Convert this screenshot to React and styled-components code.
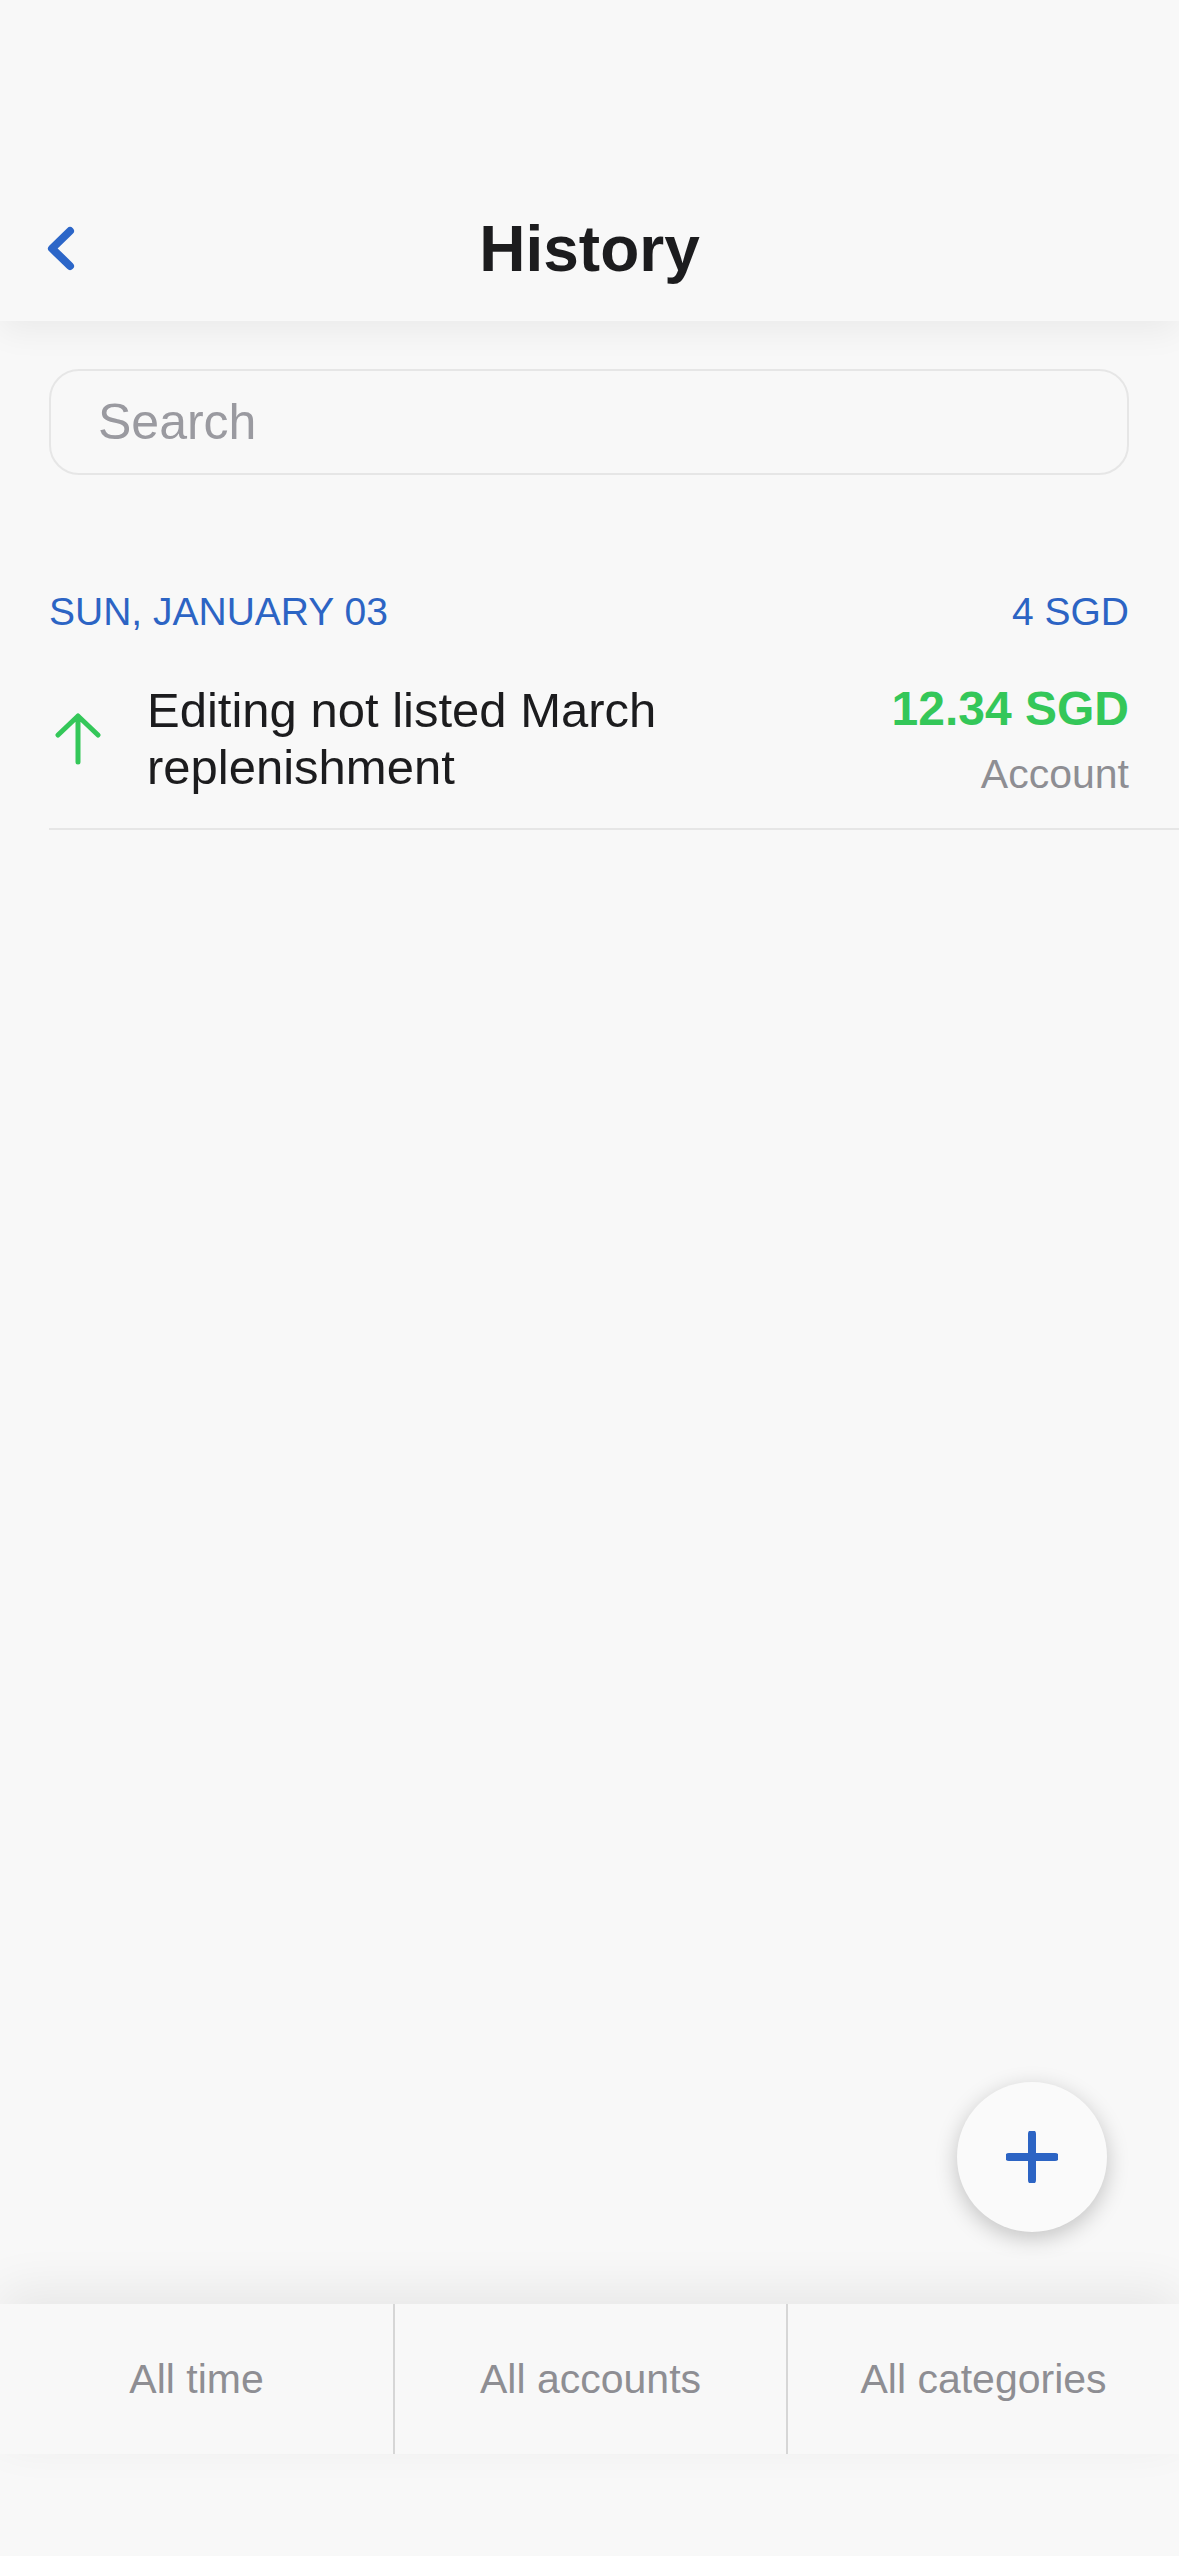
import React from 'react';
import styled, { createGlobalStyle } from 'styled-components';

const GlobalStyle = createGlobalStyle`
  html, body {
    margin: 0;
    padding: 0;
    background: #f8f8f8;
    font-family: "Liberation Sans", Arial, sans-serif;
  }
`;

const Screen = styled.div`
  display: flex;
  flex-direction: column;
  height: 2556px;
  background: #f8f8f8;
  overflow: hidden;
`;

const Header = styled.header`
  position: relative;
  z-index: 2;
  height: 321px;
  box-sizing: border-box;
  padding: 185px 0 8px;
  background: #f8f8f8;
  box-shadow: 0 10px 32px rgba(0, 0, 0, 0.06);
`;

const NavRow = styled.div`
  display: grid;
  grid-template-columns: 1fr auto 1fr;
  align-items: center;
  height: 128px;
`;

const BackButton = styled.button`
  justify-self: start;
  display: flex;
  align-items: center;
  margin-left: 44px;
  padding: 0;
  border: 0;
  background: none;
`;

const Title = styled.h1`
  margin: 0;
  font-size: 64px;
  line-height: 64px;
  font-weight: 700;
  color: #1c1c1e;
`;

const Main = styled.main`
  position: relative;
  flex: 1;
`;

const SearchBox = styled.div`
  display: flex;
  align-items: center;
  height: 106px;
  margin: 48px 50px 0 49px;
  padding-left: 47px;
  box-sizing: border-box;
  border: 2px solid #e6e6e6;
  border-radius: 30px;
  font-size: 50px;
  color: #9a9aa0;
`;

const SectionHeader = styled.div`
  display: flex;
  justify-content: space-between;
  margin: 118px 50px 0 49px;
  font-size: 39px;
  line-height: 38px;
  color: #2c64c4;
`;

const Row = styled.div`
  display: flex;
  align-items: center;
  margin: 19px 0 0 49px;
  padding: 30px 50px 30px 0;
  border-bottom: 2px solid #e6e6e6;
`;

const IconSlot = styled.div`
  display: flex;
  align-items: center;
  width: 98px;
  flex-shrink: 0;
  padding-left: 6px;
  box-sizing: border-box;
`;

const RowTitle = styled.div`
  flex: 1;
  max-width: 580px;
  font-size: 49px;
  line-height: 57px;
  color: #1c1c1e;
`;

const RowMeta = styled.div`
  margin-left: auto;
  display: flex;
  flex-direction: column;
  align-items: flex-end;
`;

const Amount = styled.div`
  font-size: 48px;
  line-height: 57px;
  font-weight: 700;
  color: ${(p) => (p.income ? '#34c759' : '#1c1c1e')};
`;

const AccountName = styled.div`
  margin-top: 13px;
  font-size: 41px;
  line-height: 48px;
  color: #8e8e93;
`;

const Fab = styled.button`
  position: absolute;
  right: 72px;
  bottom: 72px;
  display: flex;
  align-items: center;
  justify-content: center;
  width: 150px;
  height: 150px;
  padding: 0;
  border: 0;
  border-radius: 50%;
  background: #fafafa;
  box-shadow: 0 6px 22px rgba(0, 0, 0, 0.22);
`;

const FilterBar = styled.nav`
  position: relative;
  z-index: 2;
  display: grid;
  grid-template-columns: repeat(3, 1fr);
  height: 150px;
  background: #f8f8f8;
  box-shadow: 0 -14px 50px rgba(0, 0, 0, 0.07);
`;

const FilterItem = styled.div`
  display: flex;
  align-items: center;
  justify-content: center;
  font-size: 41px;
  color: #8e8e93;
  border-left: ${(p) => (p.first ? 'none' : '2px solid #d6d6d6')};
`;

const SafeArea = styled.div`
  height: 102px;
  background: #f8f8f8;
`;

const ChevronLeft = () => (
  <svg width="34" height="52" viewBox="0 0 34 52" fill="none">
    <path d="M26 8 L8 25.5 L26 43" stroke="#2c66c8" strokeWidth="8" strokeLinecap="round" strokeLinejoin="round" />
  </svg>
);

const ArrowUp = () => (
  <svg width="46" height="52" viewBox="0 0 46 52" fill="none">
    <path d="M23 3 V49 M3 22 L23 3 L43 22" stroke="#34c759" strokeWidth="5" strokeLinecap="round" strokeLinejoin="round" />
  </svg>
);

const PlusIcon = () => (
  <svg width="52" height="52" viewBox="0 0 52 52" fill="none">
    <path d="M26 3 V49 M3 26 H49" stroke="#2c64c4" strokeWidth="8" strokeLinecap="round" />
  </svg>
);

const transactions = [
  { id: 1, title: 'Editing not listed March replenishment', amount: '12.34 SGD', account: 'Account', income: true },
];

export default function App() {
  return (
    <>
      <GlobalStyle />
      <Screen>
        <Header>
          <NavRow>
            <BackButton>
              <ChevronLeft />
            </BackButton>
            <Title>History</Title>
            <div />
          </NavRow>
        </Header>
        <Main>
          <SearchBox>Search</SearchBox>
          <SectionHeader>
            <span>SUN, JANUARY 03</span>
            <span>4 SGD</span>
          </SectionHeader>
          {transactions.map((t) => (
            <Row key={t.id}>
              <IconSlot>
                <ArrowUp />
              </IconSlot>
              <RowTitle>{t.title}</RowTitle>
              <RowMeta>
                <Amount income={t.income}>{t.amount}</Amount>
                <AccountName>{t.account}</AccountName>
              </RowMeta>
            </Row>
          ))}
          <Fab>
            <PlusIcon />
          </Fab>
        </Main>
        <FilterBar>
          <FilterItem first>All time</FilterItem>
          <FilterItem>All accounts</FilterItem>
          <FilterItem>All categories</FilterItem>
        </FilterBar>
        <SafeArea />
      </Screen>
    </>
  );
}
